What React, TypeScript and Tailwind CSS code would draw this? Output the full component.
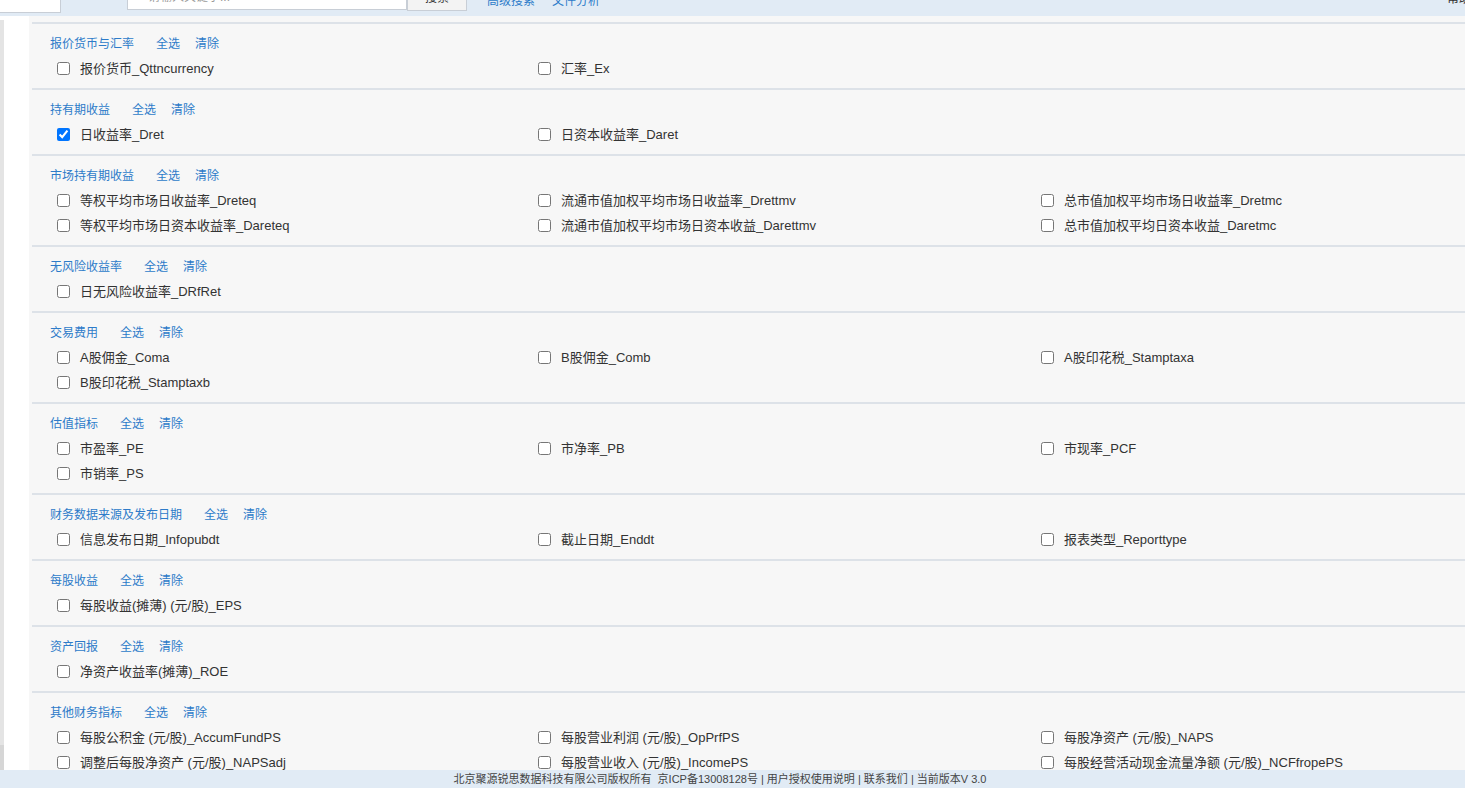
import React from "react"

interface Section {
  title: string
  items: string[]
  checked?: string[]
}

const sections: Section[] = [
  { title: "报价货币与汇率", items: ["报价货币_Qttncurrency", "汇率_Ex"] },
  { title: "持有期收益", items: ["日收益率_Dret", "日资本收益率_Daret"], checked: ["日收益率_Dret"] },
  {
    title: "市场持有期收益",
    items: [
      "等权平均市场日收益率_Dreteq",
      "流通市值加权平均市场日收益率_Drettmv",
      "总市值加权平均市场日收益率_Dretmc",
      "等权平均市场日资本收益率_Dareteq",
      "流通市值加权平均市场日资本收益_Darettmv",
      "总市值加权平均日资本收益_Daretmc",
    ],
  },
  { title: "无风险收益率", items: ["日无风险收益率_DRfRet"] },
  { title: "交易费用", items: ["A股佣金_Coma", "B股佣金_Comb", "A股印花税_Stamptaxa", "B股印花税_Stamptaxb"] },
  { title: "估值指标", items: ["市盈率_PE", "市净率_PB", "市现率_PCF", "市销率_PS"] },
  { title: "财务数据来源及发布日期", items: ["信息发布日期_Infopubdt", "截止日期_Enddt", "报表类型_Reporttype"] },
  { title: "每股收益", items: ["每股收益(摊薄) (元/股)_EPS"] },
  { title: "资产回报", items: ["净资产收益率(摊薄)_ROE"] },
  {
    title: "其他财务指标",
    items: [
      "每股公积金 (元/股)_AccumFundPS",
      "每股营业利润 (元/股)_OpPrfPS",
      "每股净资产 (元/股)_NAPS",
      "调整后每股净资产 (元/股)_NAPSadj",
      "每股营业收入 (元/股)_IncomePS",
      "每股经营活动现金流量净额 (元/股)_NCFfropePS",
      "每股现金流量净额 (元/股)_NCFPS",
      "每股未分配利润 (元/股)_UndisPS",
    ],
  },
]

const font = { fontFamily: '"Liberation Sans", Arial, "Noto Sans CJK SC", sans-serif' }

function FieldGroup({ section }: { section: Section }) {
  return (
    <div className="border-t-2 border-[#dde2e8] pl-[18px] pt-[10px] pb-[7px]">
      {/* group title + actions */}
      <div className="flex h-[20px] items-center text-[12px] text-[#2d7bc9]">
        <span>{section.title}</span>
        <a className="ml-[22px] cursor-pointer">全选</a>
        <a className="ml-[15px] cursor-pointer">清除</a>
      </div>
      <div className="mt-[2px] grid grid-cols-[481px_503px_1fr]">
        {section.items.map((item) => (
          <label key={item} className="flex h-[25px] items-center text-[13px] text-[#333]">
            <input
              type="checkbox"
              defaultChecked={section.checked?.includes(item)}
              className="ml-[7px] mr-[10px] h-[13px] w-[13px]"
            />
            <span className="whitespace-nowrap">{item}</span>
          </label>
        ))}
      </div>
    </div>
  )
}

export default function App() {
  return (
    <div className="flex h-[788px] w-full flex-col overflow-hidden bg-white" style={font}>
      {/* top bar, scrolled mostly out of view */}
      <div className="flex h-[16px] shrink-0 items-end overflow-hidden bg-[#e1ebf5]">
        <div className="mb-[3px] h-[30px] w-[61px] shrink-0 border-r border-b border-[#c8ced6] bg-white" />
        <div className="mb-[6px] ml-[66px] flex h-[26px] w-[280px] shrink-0 items-center border border-[#c8ced6] bg-white pl-[20px] text-[12px] text-[#999]">
          请输入关键字...
        </div>
        <div className="mb-[5px] flex h-[26px] w-[60px] shrink-0 items-center justify-center border border-[#c8ced6] bg-[#f3f3f3] text-[12px] text-[#333]">
          搜索
        </div>
        <div className="mb-[8px] ml-[20px] flex gap-[17px] text-[12px] leading-[14px] text-[#2d7bc9]">
          <span>高级搜索</span>
          <span>文件分析</span>
        </div>
        <div className="mb-[10px] ml-auto mr-[-6px] text-[12px] leading-[14px] text-[#333]">帮助</div>
      </div>

      <div className="flex min-h-0 flex-1">
        {/* left strip */}
        <div className="flex w-[29px] shrink-0 bg-white">
          <div className="flex w-[4px] flex-col pt-[4px]">
            <div className="flex-1 bg-[#e4e4e4]" />
            <div className="h-[25px] bg-[#d6d6d6]" />
          </div>
        </div>

        {/* fields panel */}
        <div className="min-w-0 flex-1 overflow-hidden bg-[#f7f7f7] pt-[6px] pl-[3px]">
          {sections.map((s) => (
            <FieldGroup key={s.title} section={s} />
          ))}
        </div>
      </div>

      <div className="h-[18px] shrink-0 bg-[#e1ebf5] pr-[25px] text-center text-[11px] leading-[18px] text-[#444]">
        北京聚源锐思数据科技有限公司版权所有&nbsp;&nbsp;京ICP备13008128号 | 用户授权使用说明 | 联系我们 | 当前版本V 3.0
      </div>
    </div>
  )
}
